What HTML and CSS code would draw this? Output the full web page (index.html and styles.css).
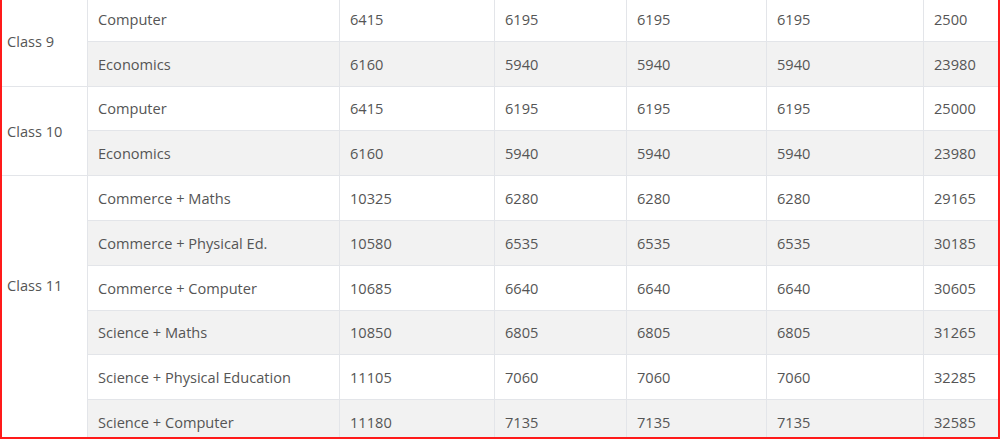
FILE: index.html
```html
<!DOCTYPE html>
<html>
<head>
<meta charset="utf-8">
<link rel="stylesheet" href="styles.css">
</head>
<body>
<div class="frame">
  <table class="fees">
    <colgroup>
      <col class="c-class"><col class="c-sub"><col class="c-a"><col class="c-b"><col class="c-c"><col class="c-d"><col class="c-e">
    </colgroup>
    <tbody>
      <tr>
        <td class="cls" rowspan="2">Class 9</td>
        <td>Computer</td><td>6415</td><td>6195</td><td>6195</td><td>6195</td><td>2500</td>
      </tr>
      <tr class="alt">
        <td>Economics</td><td>6160</td><td>5940</td><td>5940</td><td>5940</td><td>23980</td>
      </tr>
      <tr>
        <td class="cls" rowspan="2">Class 10</td>
        <td>Computer</td><td>6415</td><td>6195</td><td>6195</td><td>6195</td><td>25000</td>
      </tr>
      <tr class="alt">
        <td>Economics</td><td>6160</td><td>5940</td><td>5940</td><td>5940</td><td>23980</td>
      </tr>
      <tr>
        <td class="cls cls-long" rowspan="6">Class 11</td>
        <td>Commerce + Maths</td><td>10325</td><td>6280</td><td>6280</td><td>6280</td><td>29165</td>
      </tr>
      <tr class="alt">
        <td>Commerce + Physical Ed.</td><td>10580</td><td>6535</td><td>6535</td><td>6535</td><td>30185</td>
      </tr>
      <tr>
        <td>Commerce + Computer</td><td>10685</td><td>6640</td><td>6640</td><td>6640</td><td>30605</td>
      </tr>
      <tr class="alt">
        <td>Science + Maths</td><td>10850</td><td>6805</td><td>6805</td><td>6805</td><td>31265</td>
      </tr>
      <tr>
        <td>Science + Physical Education</td><td>11105</td><td>7060</td><td>7060</td><td>7060</td><td>32285</td>
      </tr>
      <tr class="alt">
        <td>Science + Computer</td><td>11180</td><td>7135</td><td>7135</td><td>7135</td><td>32585</td>
      </tr>
    </tbody>
  </table>
</div>
</body>
</html>
```

FILE: styles.css
```css
html, body {
  margin: 0;
  padding: 0;
  background: #ffffff;
}

.frame {
  box-sizing: border-box;
  width: 1000px;
  height: 439px;
  overflow: hidden;
  border: 2px solid #ff1a1a;
  border-top: none;
  background: #ffffff;
}

.fees {
  border-collapse: collapse;
  table-layout: fixed;
  width: 1010px;
  margin-top: -4px;
  margin-left: -3px;
  font-family: "Open Sans", "Noto Sans", sans-serif;
  font-size: 14.6px;
  color: #555555;
}

.c-class { width: 88px; }
.c-sub { width: 252px; }
.c-a { width: 155px; }
.c-b { width: 132px; }
.c-c { width: 140px; }
.c-d { width: 157px; }
.c-e { width: 86px; }

.fees td {
  border: 1px solid #e3e5e9;
  height: 44.8px;
  padding: 0 10px;
  box-sizing: border-box;
  vertical-align: middle;
  text-align: left;
  white-space: nowrap;
  background: #ffffff;
}

.fees tr.alt td {
  background: #f2f2f2;
}

.fees td.cls {
  background: #ffffff;
  padding-left: 7px;
}

.fees td.cls-long {
  padding-bottom: 50px;
}
```
